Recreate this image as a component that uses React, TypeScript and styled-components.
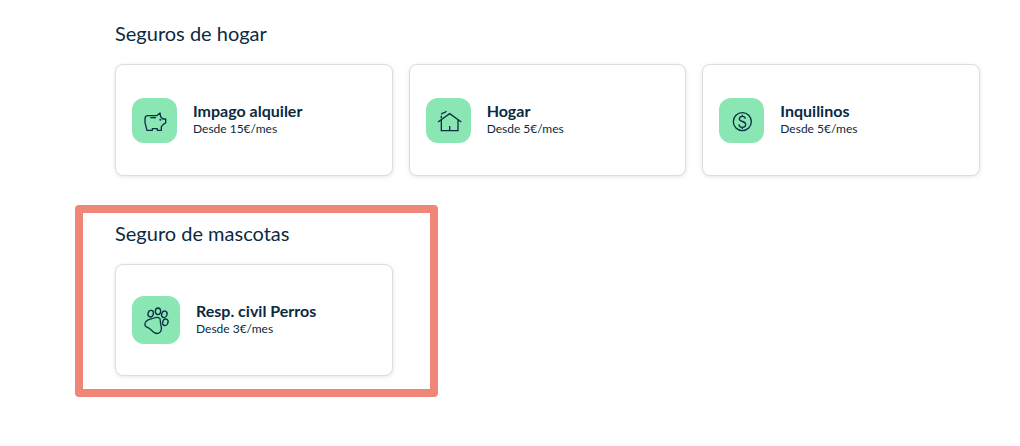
import React from "react";
import styled, { createGlobalStyle } from "styled-components";

const GlobalStyle = createGlobalStyle`
  *, *::before, *::after { box-sizing: border-box; }
  body {
    margin: 0;
    background: #fff;
    color: #0b2a42;
    font-family: Lato, "Liberation Sans", sans-serif;
  }
`;

const Page = styled.main`
  display: flex;
  flex-direction: column;
  gap: 44px;
  padding: 20px 40px 48px 115px;
`;

const Section = styled.section`
  position: relative;
`;

const Heading = styled.h2`
  margin: 0 0 18px;
  font-size: 20px;
  font-weight: 400;
  line-height: 26px;
`;

const CardGrid = styled.div`
  display: grid;
  grid-template-columns: repeat(3, minmax(0, 1fr));
  gap: 16px;
`;

const Card = styled.a`
  display: flex;
  align-items: center;
  gap: 16px;
  min-height: 112px;
  padding: 16px;
  border: 1px solid #dcdddf;
  border-radius: 8px;
  background: #fff;
  box-shadow: 0 1px 4px rgba(0, 0, 0, 0.1);
  color: inherit;
  text-decoration: none;
`;

const Tile = styled.span<{ $size: number }>`
  flex: none;
  display: block;
  width: ${(p) => p.$size}px;
  height: ${(p) => p.$size}px;
  border-radius: 12px;
  background: #8ae6b2;

  svg {
    display: block;
    width: 100%;
    height: 100%;
    fill: none;
    stroke: #0d2f45;
    stroke-width: 4;
  }
`;

const CardText = styled.span`
  display: flex;
  flex-direction: column;
  gap: 2px;
`;

const Title = styled.span`
  font-size: 16px;
  font-weight: 700;
  line-height: 16px;
`;

const Price = styled.span`
  font-size: 12px;
  line-height: 16px;
`;

const Highlight = styled.div`
  position: absolute;
  top: -15px;
  bottom: -21px;
  left: -40px;
  width: calc((100% - 32px) / 3 + 85px);
  border: 8px solid #ef8677;
  border-radius: 4px;
  pointer-events: none;
`;

const PigIcon = () => (
  <svg viewBox="0 0 135 135" aria-hidden="true">
    <path d="M48 53H74L84 45L86 56L93 63H101V75L94 79L88 86V97H76V92H61V97H45L39 74V62Q39 53 48 53Z" strokeLinejoin="round" />
    <path d="M55 59H72" />
    <circle cx="85" cy="65" r="3" fill="#0d2f45" stroke="none" />
  </svg>
);

const HouseIcon = () => (
  <svg viewBox="0 0 135 135" aria-hidden="true">
    <path d="M36 72L71 47L106 72M46 66V98H96V66M71 98V84M46 61V53M46 49C50 41 56 48 61 39" />
  </svg>
);

const DollarIcon = () => (
  <svg viewBox="0 0 135 135" aria-hidden="true">
    <circle cx="70" cy="71" r="27" />
    <path d="M79 62C78 57 74 55 70 55C64 55 61 58 61 63C61 73 80 68 80 79C80 85 76 88 70 88C64 88 60 85 60 79M70 50V56M70 87V93" />
  </svg>
);

const PawIcon = () => (
  <svg viewBox="0 0 144 144" aria-hidden="true">
    <ellipse cx="56" cy="53" rx="8" ry="10" transform="rotate(15 56 53)" />
    <ellipse cx="78" cy="46" rx="8" ry="10" />
    <ellipse cx="97" cy="55" rx="8" ry="10" transform="rotate(18 97 55)" />
    <ellipse cx="100" cy="79" rx="8" ry="10" transform="rotate(18 100 79)" />
    <path d="M41 78C45 70 56 70 66 66C76 62 86 65 85 74C84 83 90 93 88 101C86 112 76 115 67 110C61 106 56 99 48 95C39 92 36 86 41 78Z" />
  </svg>
);

interface Product {
  title: string;
  price: string;
  icon: React.ReactNode;
  tile: number;
}

const homeProducts: Product[] = [
  { title: "Impago alquiler", price: "Desde 15€/mes", icon: <PigIcon />, tile: 45 },
  { title: "Hogar", price: "Desde 5€/mes", icon: <HouseIcon />, tile: 45 },
  { title: "Inquilinos", price: "Desde 5€/mes", icon: <DollarIcon />, tile: 45 },
];

const petProducts: Product[] = [
  { title: "Resp. civil Perros", price: "Desde 3€/mes", icon: <PawIcon />, tile: 48 },
];

const ProductSection = ({
  heading,
  products,
  highlighted = false,
}: {
  heading: string;
  products: Product[];
  highlighted?: boolean;
}) => (
  <Section>
    <Heading>{heading}</Heading>
    <CardGrid>
      {products.map((p) => (
        <Card key={p.title} href="#">
          <Tile $size={p.tile}>{p.icon}</Tile>
          <CardText>
            <Title>{p.title}</Title>
            <Price>{p.price}</Price>
          </CardText>
        </Card>
      ))}
    </CardGrid>
    {highlighted && <Highlight />}
  </Section>
);

export default function App() {
  return (
    <>
      <GlobalStyle />
      <Page>
        <ProductSection heading="Seguros de hogar" products={homeProducts} />
        <ProductSection heading="Seguro de mascotas" products={petProducts} highlighted />
      </Page>
    </>
  );
}
